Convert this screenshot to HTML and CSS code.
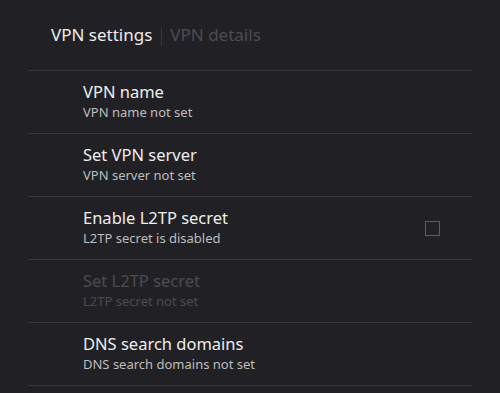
FILE: index.html
```html
<!DOCTYPE html>
<html lang="en">
<head>
    <meta charset="UTF-8">
    <meta name="viewport" content="width=device-width, initial-scale=1.0">
    <title>VPN settings</title>
    <link rel="stylesheet" href="styles.css">
</head>
<body>
    <header class="tabs">
        <span class="tab active">VPN settings</span>
        <span class="tab-divider"></span>
        <span class="tab">VPN details</span>
    </header>

    <ul class="pref-list">
        <li class="pref">
            <div class="pref-text">
                <div class="pref-title">VPN name</div>
                <div class="pref-summary">VPN name not set</div>
            </div>
        </li>
        <li class="pref">
            <div class="pref-text">
                <div class="pref-title">Set VPN server</div>
                <div class="pref-summary">VPN server not set</div>
            </div>
        </li>
        <li class="pref">
            <div class="pref-text">
                <div class="pref-title">Enable L2TP secret</div>
                <div class="pref-summary">L2TP secret is disabled</div>
            </div>
            <span class="checkbox"></span>
        </li>
        <li class="pref disabled">
            <div class="pref-text">
                <div class="pref-title">Set L2TP secret</div>
                <div class="pref-summary">L2TP secret not set</div>
            </div>
        </li>
        <li class="pref">
            <div class="pref-text">
                <div class="pref-title">DNS search domains</div>
                <div class="pref-summary">DNS search domains not set</div>
            </div>
        </li>
    </ul>
</body>
</html>
```

FILE: styles.css
```css
:root {
    --bg: #212125;
    --line: #38383c;
    --text: #ededed;
    --text-secondary: #bdbdbd;
    --text-disabled: #4c4c50;
}

body {
    margin: 0;
    background-color: var(--bg);
    color: var(--text);
    font-family: 'Noto Sans', 'Open Sans', sans-serif;
    overflow: hidden;
}

.tabs {
    height: 70px;
    display: flex;
    align-items: center;
    padding-left: 51px;
    font-size: 17px;
    line-height: 22px;
}

.tab {
    color: var(--text-disabled);
}

.tab.active {
    color: var(--text);
}

.tab-divider {
    width: 1px;
    height: 19px;
    margin: 3px 8px 0 9px;
    background: var(--line);
}

.pref-list {
    list-style: none;
    margin: 0 28px;
    padding: 0;
    border-bottom: 1px solid var(--line);
}

.pref {
    display: flex;
    align-items: center;
    border-top: 1px solid var(--line);
    padding: 11px 32px 11px 55px;
}

.pref-text {
    flex: 1;
}

.pref-title {
    font-size: 16.5px;
    line-height: 20px;
}

.pref-summary {
    font-size: 13px;
    line-height: 20px;
    color: var(--text-secondary);
}

.pref.disabled .pref-title,
.pref.disabled .pref-summary {
    color: var(--text-disabled);
}

.checkbox {
    width: 13px;
    height: 13px;
    border: 1.5px solid #5e5e62;
}
```
